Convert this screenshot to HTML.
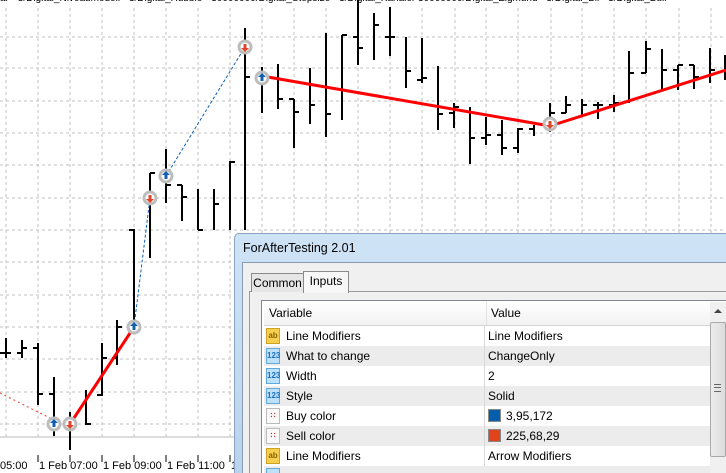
<!DOCTYPE html>
<html style="width:726px;height:473px;overflow:hidden"><head><meta charset="utf-8"><style>
body{margin:0;width:726px;height:473px;overflow:hidden;background:#fff;font-family:"Liberation Sans",sans-serif;position:relative}
svg{position:absolute;left:0;top:0}
.dlg{position:absolute;left:234px;top:233px;width:491px;height:239px;border:1px solid #8aa4c0;border-right:none;border-bottom:none;border-radius:5px 0 0 0;background:linear-gradient(#cfe3f6,#b9d3ee);overflow:hidden}
.ttl{position:absolute;left:8px;top:7px;font-size:12.5px;color:#000}
.body{position:absolute;left:7px;top:28px;width:484px;height:211px;background:#f0f0f0;border-left:1px solid #8a9cb0;border-top:1px solid #8a9cb0;overflow:hidden}
.tab{position:absolute;font-size:12px;border:1px solid #8a8a8a;border-bottom:none}
.panel{position:absolute;left:6px;top:28px;width:478px;height:183px;border-left:1px solid #9a9a9a;border-top:1px solid #9a9a9a;background:#f0f0f0}
.grid{position:absolute;left:18px;top:37px;width:464px;height:173px;border-left:1px solid #828790;border-top:1px solid #828790;background:#fff;overflow:hidden}
.row{position:absolute;left:2px;width:446px;height:20px;font-size:12px;line-height:20px;border-bottom:1px solid #d8d8d8;overflow:hidden}
.row .n{position:absolute;left:22px}
.row .v{position:absolute;left:224px}
.row .d{position:absolute;left:220px;top:0;width:1px;height:20px;background:#d8d8d8}
.ic{position:absolute;left:2px;top:2px;font-size:8px;text-align:center;font-weight:bold}
.sw{display:inline-block;width:11px;height:11px;vertical-align:-2px;margin-right:5px;border:1px solid #888}
</style></head><body>
<div style="position:absolute;left:0;top:0;height:4px;overflow:hidden;width:726px"><div style="margin-top:-7px;font-size:10px;white-space:nowrap;color:#000">ar · 3/Digital_Niveaumodell · 3/Digital_Hubble · 30000000/Digital_Stepsize · 3/Digital_Kanaler 30000000/Digital_Zigmund · 3/Digital_Bil · 3/Digital_Bull</div></div>
<svg width="726" height="473">
<g stroke="#c0c0c0" stroke-dasharray="3,3" stroke-width="1">
<path d="M6 8V437M38 8V437M70 8V437M102 8V437M134 8V437M166 8V437M198 8V437M230 8V437M262 8V437M294 8V437M326 8V437M358 8V437M390 8V437M422 8V437M455 8V437M486 8V437M518 8V437M551 8V437M582 8V437M614 8V437M646 8V437M679 8V437M711 8V437"/>
<path d="M0 37H726M0 68H726M0 101H726M0 133H726M0 165H726M0 198H726M0 230H726M0 262H726M0 295H726M0 327H726M0 359H726M0 392H726M0 424H726"/>
</g>
<path d="M0 437H240" stroke="#bbb"/>
<path d="M38 455V462M70 455V462M102 455V462M134 455V462M166 455V462M198 455V462M230 455V462" stroke="#000"/>
<g stroke="#000" stroke-width="2" fill="none">
<path d="M6 338V358M0 353H6M6 353H11"/>
<path d="M22 340V358M17 353H22M22 348H27"/>
<path d="M38 343V405M33 348H38M38 394H43"/>
<path d="M54 377V436M49 394H54"/>
<path d="M70 412V450"/>
<path d="M86 390V425M86 424H91"/>
<path d="M102 343V396M97 395H102M102 358H107"/>
<path d="M117 320V365M112 358H117M117 327H122"/>
<path d="M134 229V327M129 230H134"/>
<path d="M150 173V258M150 173H155"/>
<path d="M166 149V203M166 185H171"/>
<path d="M182 185V221M177 185H182M182 197H187"/>
<path d="M198 189V230M198 230H203"/>
<path d="M214 189V230M214 204H219"/>
<path d="M230 161V230M230 162H235"/>
<path d="M245 28V230M245 77H250"/>
<path d="M262 67V113"/>
<path d="M278 64V109M278 99H283"/>
<path d="M294 99V148M289 99H294M294 112H299"/>
<path d="M310 68V124M310 105H315"/>
<path d="M326 33V137M326 114H331"/>
<path d="M342 35V120M342 35H347"/>
<path d="M358 0V65M353 37H358M358 48H363"/>
<path d="M374 13V60M374 25H379"/>
<path d="M390 7V56M385 37H390M390 37H395"/>
<path d="M406 37V88M406 71H411"/>
<path d="M422 38V83M417 80H422M422 78H427"/>
<path d="M438 66V130M438 114H443"/>
<path d="M454 103V128M449 113H454M454 107H459"/>
<path d="M470 107V164M470 138H475"/>
<path d="M486 117V145M481 138H486M486 135H491"/>
<path d="M502 120V155M497 135H502M502 148H507"/>
<path d="M518 128V153M513 148H518M518 129H523"/>
<path d="M534 125V136M529 129H534"/>
<path d="M550 103V132M550 113H555"/>
<path d="M566 96V113M561 113H566M566 105H571"/>
<path d="M582 99V117M582 105H587"/>
<path d="M598 102V119M593 105H598M598 105H603"/>
<path d="M614 95V112M609 105H614M614 103H619"/>
<path d="M629 51V103M629 73H634"/>
<path d="M646 41V73M641 73H646M646 49H651"/>
<path d="M662 49V90M662 70H667"/>
<path d="M678 65V90M673 70H678M678 65H683"/>
<path d="M694 65V89M689 65H694M694 77H699"/>
<path d="M710 48V83M710 70H715"/>
<path d="M725 55V80"/>
</g>
<path d="M0 393L54 420" stroke="#e0442a" stroke-dasharray="2,3" fill="none"/>
<path d="M134 327L150 198M166 176L245 47" stroke="#1060b0" stroke-dasharray="3,2" fill="none"/>
<path d="M70 424L134 327M262 76L550 126L726 70" stroke="#ff0000" stroke-width="3" fill="none"/>
<g fill="#fff" stroke="#bdbdbd" stroke-width="3">
<circle cx="54" cy="424" r="6"/><circle cx="70" cy="424" r="6"/><circle cx="134" cy="327" r="6"/>
<circle cx="150" cy="198" r="6"/><circle cx="166" cy="176" r="6"/><circle cx="245" cy="47" r="6"/>
<circle cx="262" cy="78" r="6"/><circle cx="550" cy="124" r="6"/>
</g>
<g fill="#1060b0"><path d="M54 419l-4 4h2.5v4h3v-4h2.5z"/><path d="M134 322l-4 4h2.5v4h3v-4h2.5z"/><path d="M166 171l-4 4h2.5v4h3v-4h2.5z"/><path d="M262 73l-4 4h2.5v4h3v-4h2.5z"/></g>
<g fill="#e0442a"><path d="M70 429l-4-4h2.5v-4h3v4h2.5z"/><path d="M150 203l-4-4h2.5v-4h3v4h2.5z"/><path d="M245 52l-4-4h2.5v-4h3v4h2.5z"/><path d="M550 129l-4-4h2.5v-4h3v4h2.5z"/></g>
<g font-family="Liberation Sans" font-size="11" fill="#000">
<text x="0" y="469">05:00</text><text x="39" y="469">1 Feb 07:00</text><text x="103" y="469">1 Feb 09:00</text><text x="167" y="469">1 Feb 11:00</text><text x="231" y="469">1</text>
</g>
</svg>
<div class="dlg">
<div class="ttl">ForAfterTesting 2.01</div>
<div class="body">
<div class="panel"></div>
<div class="tab" style="left:8px;top:10px;width:51px;height:18px;line-height:19px;text-align:center;background:#e6e6e6">Common</div>
<div class="tab" style="left:60px;top:8px;width:44px;height:21px;line-height:18px;text-align:center;background:#f7f7f7;z-index:2">Inputs</div>
<div class="grid">
<div style="position:absolute;left:2px;top:1px;width:446px;height:23px;background:linear-gradient(#fff,#f2f2f2);border-bottom:1px solid #d5d5d5;font-size:12px;line-height:23px"><span style="position:absolute;left:5px">Variable</span><span style="position:absolute;left:222px;top:0;width:1px;height:23px;background:#e2e2e2"></span><span style="position:absolute;left:227px">Value</span></div>
<div class="row" style="top:25px;background:#fff"><div class="ic" style="background:#f5d050;color:#8a6000;border:1px solid #d0a020;width:12px;height:14px;line-height:14px">ab</div><span class="n">Line Modifiers</span><span class="d"></span><span class="v">Line Modifiers</span></div>
<div class="row" style="top:45px;background:#ececec"><div class="ic" style="background:#bde0fb;color:#1a70c0;border:1px solid #60a8e0;width:12px;height:14px;line-height:14px">123</div><span class="n">What to change</span><span class="d"></span><span class="v">ChangeOnly</span></div>
<div class="row" style="top:65px;background:#fff"><div class="ic" style="background:#bde0fb;color:#1a70c0;border:1px solid #60a8e0;width:12px;height:14px;line-height:14px">123</div><span class="n">Width</span><span class="d"></span><span class="v">2</span></div>
<div class="row" style="top:85px;background:#ececec"><div class="ic" style="background:#bde0fb;color:#1a70c0;border:1px solid #60a8e0;width:12px;height:14px;line-height:14px">123</div><span class="n">Style</span><span class="d"></span><span class="v">Solid</span></div>
<div class="row" style="top:105px;background:#fff"><div class="ic" style="background:#fafafa;color:#c03030;border:1px solid #bbb;width:12px;height:14px;line-height:14px">∷</div><span class="n">Buy color</span><span class="d"></span><span class="v"><span class="sw" style="background:#035fac"></span>3,95,172</span></div>
<div class="row" style="top:125px;background:#ececec"><div class="ic" style="background:#fafafa;color:#c03030;border:1px solid #bbb;width:12px;height:14px;line-height:14px">∷</div><span class="n">Sell color</span><span class="d"></span><span class="v"><span class="sw" style="background:#e1441d"></span>225,68,29</span></div>
<div class="row" style="top:145px;background:#fff"><div class="ic" style="background:#f5d050;color:#8a6000;border:1px solid #d0a020;width:12px;height:14px;line-height:14px">ab</div><span class="n">Line Modifiers</span><span class="d"></span><span class="v">Arrow Modifiers</span></div>
<div class="row" style="top:165px;height:8px;border:none;background:#ececec"><div class="ic" style="background:#bde0fb;border:1px solid #60a8e0;width:12px;height:6px"></div></div>
<div style="position:absolute;left:448px;top:1px;width:16px;height:172px;background:#f0f0f0">
<div style="position:absolute;left:4px;top:7px;width:0;height:0;border:4px solid transparent;border-bottom:4px solid #444;border-top:none"></div>
<div style="position:absolute;left:0;top:20px;width:14px;height:133px;border:1px solid #a8a8a8;border-radius:2px;background:linear-gradient(90deg,#ececec,#dcdcdc)"></div>
<div style="position:absolute;left:4px;top:82px;width:7px;height:6px;border-top:1px solid #666;border-bottom:1px solid #666"><div style="margin-top:2px;border-top:1px solid #666"></div></div>
</div>
</div>
</div>
</div>
</body></html>
